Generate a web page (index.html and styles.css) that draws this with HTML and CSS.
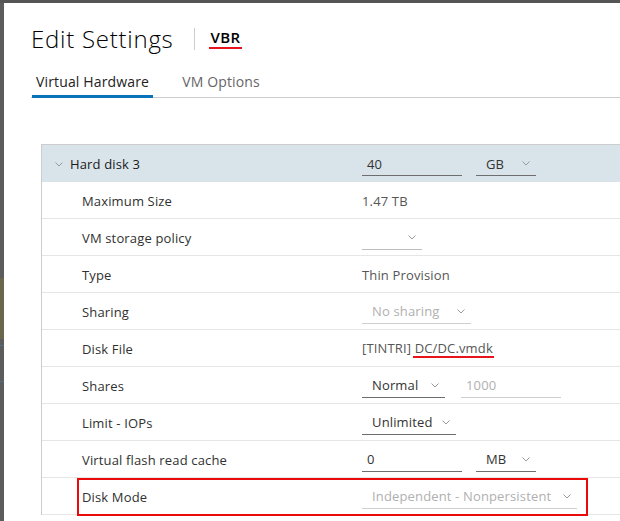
FILE: index.html
```html
<!DOCTYPE html>
<html>
<head>
<meta charset="utf-8">
<title>Edit Settings</title>
<link rel="stylesheet" href="styles.css">
</head>
<body>
<div class="screen">
  <div class="edge">
    <div class="edge-gray edge-top"></div>
    <div class="edge-olive"></div>
    <div class="edge-gray edge-gap"></div>
    <div class="edge-blue"></div>
    <div class="edge-gray edge-mid"></div>
    <div class="edge-blue"></div>
    <div class="edge-gray edge-rest"></div>
  </div>
  <div class="modal">
    <div class="modal-header">
      <h1 class="title">Edit Settings</h1>
      <span class="divider"></span>
      <span class="vm-name"><span class="mark">VBR</span></span>
    </div>
    <nav class="tabs">
      <span class="tab active">Virtual Hardware</span>
      <span class="tab">VM Options</span>
    </nav>
    <div class="content">
      <div class="card">
        <div class="row head">
          <div class="label"><svg class="chev head-chev" width="8" height="5" viewBox="0 0 8 5"><polyline points="0.5,0.5 4,4 7.5,0.5"/></svg>Hard disk 3</div>
          <div class="value">
            <span class="field w100">40</span>
            <span class="select w60">GB<svg class="chev" width="8" height="5" viewBox="0 0 8 5"><polyline points="0.5,0.5 4,4 7.5,0.5"/></svg></span>
          </div>
        </div>
        <div class="row">
          <div class="label">Maximum Size</div>
          <div class="value"><span class="text">1.47 TB</span></div>
        </div>
        <div class="row">
          <div class="label">VM storage policy</div>
          <div class="value">
            <span class="select w60 light"><span></span><svg class="chev" width="8" height="5" viewBox="0 0 8 5"><polyline points="0.5,0.5 4,4 7.5,0.5"/></svg></span>
          </div>
        </div>
        <div class="row">
          <div class="label">Type</div>
          <div class="value"><span class="text">Thin Provision</span></div>
        </div>
        <div class="row">
          <div class="label">Sharing</div>
          <div class="value">
            <span class="select w109 disabled">No sharing<svg class="chev" width="8" height="5" viewBox="0 0 8 5"><polyline points="0.5,0.5 4,4 7.5,0.5"/></svg></span>
          </div>
        </div>
        <div class="row">
          <div class="label">Disk File</div>
          <div class="value"><span class="text">[TINTRI] <span class="mark-inline">DC/DC.vmdk</span></span></div>
        </div>
        <div class="row">
          <div class="label">Shares</div>
          <div class="value">
            <span class="select w83">Normal<svg class="chev" width="8" height="5" viewBox="0 0 8 5"><polyline points="0.5,0.5 4,4 7.5,0.5"/></svg></span>
            <span class="field w100 disabled gap16">1000</span>
          </div>
        </div>
        <div class="row">
          <div class="label">Limit - IOPs</div>
          <div class="value">
            <span class="select w94">Unlimited<svg class="chev" width="8" height="5" viewBox="0 0 8 5"><polyline points="0.5,0.5 4,4 7.5,0.5"/></svg></span>
          </div>
        </div>
        <div class="row">
          <div class="label">Virtual flash read cache</div>
          <div class="value">
            <span class="field w100">0</span>
            <span class="select w60">MB<svg class="chev" width="8" height="5" viewBox="0 0 8 5"><polyline points="0.5,0.5 4,4 7.5,0.5"/></svg></span>
          </div>
        </div>
        <div class="row highlighted">
          <div class="label">Disk Mode</div>
          <div class="value">
            <span class="select w215 disabled">Independent - Nonpersistent<svg class="chev" width="8" height="5" viewBox="0 0 8 5"><polyline points="0.5,0.5 4,4 7.5,0.5"/></svg></span>
          </div>
          <div class="red-box"></div>
        </div>
      </div>
    </div>
  </div>
</div>
</body>
</html>
```
FILE: styles.css
```css
* { box-sizing: border-box; }
html, body { margin: 0; padding: 0; }
body {
  background: #555;
  font-family: "Open Sans", "Liberation Sans", sans-serif;
  letter-spacing: 0.15px;
  overflow: hidden;
}
.screen {
  display: flex;
  height: 521px;
  padding-top: 3px;
}
.edge {
  width: 4px;
  flex: none;
  display: flex;
  flex-direction: column;
}
.edge-gray { background: #5c5c5c; }
.edge-top { height: 275px; }
.edge-olive { height: 61px; background: #6a664b; }
.edge-gap { height: 6px; }
.edge-blue { height: 1px; background: #4f6f86; }
.edge-mid { height: 35px; }
.edge-rest { flex: 1; }

.modal {
  flex: 1;
  min-width: 0;
  background: #fff;
  overflow: hidden;
}
.modal-header {
  display: flex;
  align-items: center;
  padding: 20px 0 0 27px;
  height: 52px;
}
.title {
  margin: 0;
  font-size: 24px;
  font-weight: 300;
  line-height: 32px;
  letter-spacing: 0.75px;
  color: #000;
}
.divider {
  width: 1px;
  height: 22px;
  background: #ccc;
  margin: 0 14px 0 20px;
}
.vm-name {
  font-size: 15px;
  font-weight: 600;
  color: #000;
  line-height: 16px;
  letter-spacing: 0.3px;
}
.mark {
  display: inline-block;
  padding: 0 2px 2px;
  border-bottom: 2px solid #e8141c;
}

.tabs {
  display: flex;
  margin: 17px 0 0 27px;
  border-bottom: 1px solid #ccc;
}
.tab {
  font-size: 14px;
  line-height: 20px;
  color: #666;
  padding: 0 4px 3px;
  margin-left: 1px;
  margin-right: 24px;
  border-bottom: 3px solid transparent;
  margin-bottom: -1px;
}
.tab.active {
  color: #222;
  border-bottom-color: #0a72b8;
}

.content {
  padding: 46px 0 0 37px;
}
.card {
  width: 640px;
  border-top: 1px solid #ccc;
  border-left: 1px solid #ccc;
}
.row {
  position: relative;
  display: flex;
  align-items: center;
  height: 37px;
  padding-top: 1px;
  border-bottom: 1px solid #e6e6e6;
  font-size: 13px;
}
.row.head {
  background: #d9e4ea;
  border-bottom: none;
}
.label {
  width: 320px;
  flex: none;
  padding-left: 40px;
  color: #313131;
  display: flex;
  align-items: center;
}
.head .label {
  padding-left: 13px;
  color: #1a1a1a;
}
.head-chev {
  margin-right: 7px;
}
.value {
  display: flex;
  align-items: center;
  color: #565656;
}
.text { color: #565656; }
.mark-inline {
  display: inline-block;
  padding: 0 1px 0 2px;
  margin-left: -2px;
  line-height: 16px;
  border-bottom: 2px solid #e8141c;
}

.chev {
  flex: none;
}
.chev polyline {
  fill: none;
  stroke: #9a9a9a;
  stroke-width: 1;
}

.field, .select {
  display: flex;
  align-items: center;
  height: 24px;
  border-bottom: 1px solid #6e6e6e;
  color: #333;
}
.field {
  padding-left: 5px;
}
.select {
  justify-content: space-between;
  padding: 0 6px 0 10px;
}
.field.disabled, .select.disabled {
  color: #b0b0b0;
  border-bottom-color: #cfcfcf;
}
.select.light {
  border-bottom-color: #bdbdbd;
}
.w60 { width: 60px; margin-left: 14px; }
.select.light.w60 { margin-left: 0; }
.w83 { width: 83px; }
.w94 { width: 94px; }
.w100 { width: 100px; }
.w109 { width: 109px; }
.w215 { width: 215px; }
.gap16 { margin-left: 16px; }

.red-box {
  position: absolute;
  left: 35px;
  top: 0;
  width: 511px;
  height: 38px;
  border: 2px solid #ea0a0a;
}
```
